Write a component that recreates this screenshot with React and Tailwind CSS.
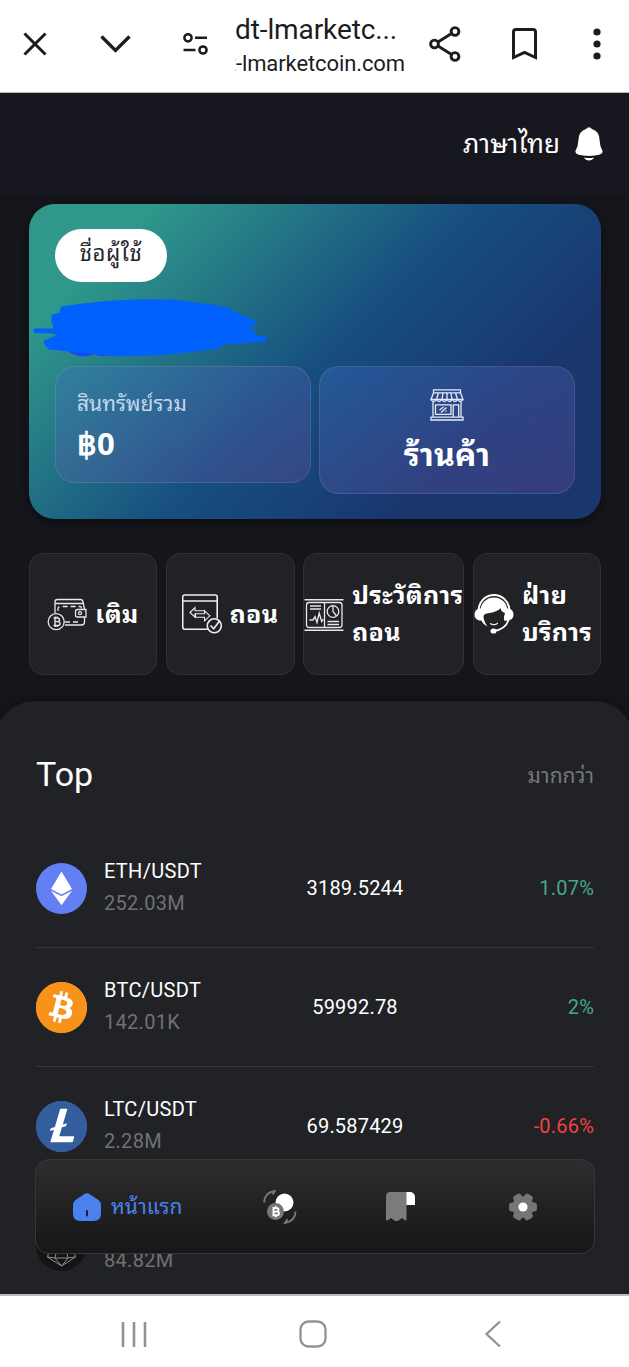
import React from "react";
import { SiBitcoin, SiLitecoin } from "react-icons/si";

const pairs = [
  { id: "eth", name: "ETH/USDT", volume: "252.03M", price: "3189.5244", change: "1.07%", up: true },
  { id: "btc", name: "BTC/USDT", volume: "142.01K", price: "59992.78", change: "2%", up: true },
  { id: "ltc", name: "LTC/USDT", volume: "2.28M", price: "69.587429", change: "-0.66%", up: false },
  { id: "eos", name: "EOS/USDT", volume: "84.82M" },
];

function CoinLogo({ id }) {
  if (id === "btc") {
    return (
      <span className="flex size-[51px] rounded-full border border-[#f7931a] bg-white">
        <SiBitcoin className="-m-px size-[51px] shrink-0 text-[#f7931a]" />
      </span>
    );
  }
  if (id === "ltc") {
    return (
      <span className="flex size-[51px] rounded-full border border-[#345d9d] bg-white">
        <SiLitecoin className="-m-px size-[51px] shrink-0 text-[#345d9d]" />
      </span>
    );
  }
  if (id === "eth") {
    return (
      <svg className="size-[51px]" viewBox="0 0 51 51">
        <circle cx="25.5" cy="25.5" r="25.5" fill="#627ff3" />
        <path d="M25.5 8.5 36 26l-10.5 5.500L15 26z" fill="#fff" />
        <path d="M15 27.8l10.500 5.500 10.500-5.500-10.500 14.400z" fill="#fff" />
      </svg>
    );
  }
  return (
    <svg className="size-[51px]" viewBox="0 0 51 51" fill="none" stroke="#8d8d8d" strokeWidth="1">
      <circle cx="25.5" cy="25.5" r="25.5" fill="#141414" stroke="none" />
      <path d="M25.500 8 16 20l-4.500 17 14.200 9L39.500 37 35 20zM11.500 37l7.500 1h13l7.500-1M19 38l6.700 8 6.300-8M19 38l6.500-30 6.500 30" />
    </svg>
  );
}

function WalletIcon() {
  return (
    <svg className="size-10 shrink-0" viewBox="0 0 40 40" fill="none" stroke="#e8e8e8" strokeWidth="1.300">
      <path d="M8 19V8q0-2.500 2.500-2.500h23q2 0 2.500 2.500l1.500 7M37.500 23v5q0 3-3 3H18M8 9.500h29" />
      <path d="M11 17v-2q0-2.500 3-2.500h19q1.500 0 1.500 2M18 28h16" strokeDasharray="5 3" />
      <path d="M30.500 15.500h8.500v7.500h-8.500q-2 0-2-2v-3.500q0-2 2-2z" />
      <circle cx="33" cy="19.200" r="1.500" />
      <circle cx="9.200" cy="27.700" r="8" />
      <path d="M6.500 24h4q2 0 2 1.800t-2 1.800H8m2.500 0q2.500 0 2.500 2T10.500 31.500h-4M8 24v7.500M8.200 22.500V24m2-1.500V24m-2 7.500V33m2-1.500V33" strokeWidth="1.400" />
    </svg>
  );
}

function WithdrawIcon() {
  return (
    <svg className="size-10 shrink-0" viewBox="0 0 40 40" fill="none" stroke="#f0f0f0" strokeWidth="1.600">
      <path d="M35.200 24.500V3q0-2-2-2H2.700q-2 0-2 2v30q0 2.200 2 2.200h23M.7 7h34.500" />
      <path d="M8 18.500l5-5v3.200h9.500v3H13v3.500zM28 21.800l-5.500-5v3H13.500v3.500h9v3.500z" strokeWidth="1.100" />
      <circle cx="32.300" cy="31.800" r="7" />
      <path d="M28.500 31.500l3.200 3.200 6-8" />
    </svg>
  );
}

function HistoryIcon() {
  return (
    <svg className="size-10 shrink-0" viewBox="0 0 40 40" fill="none" stroke="#e8e8e8" strokeWidth="1.300">
      <path d="M.5 5.800h39M.5 36.200h39" strokeWidth="1.500" />
      <rect x="2.500" y="8.500" width="35.500" height="25" rx="2.500" />
      <path d="M20.500 8.500v25M6 12h11M6 15h11M5.500 26h3.500l2-3.500 2 6 2.200-9.500 2.500 8.500.8-1.500h1M23.500 27.500h11.500M23.500 30.500h11.500" />
      <circle cx="29" cy="17.500" r="5.800" />
      <path d="M29 11.700v5.800l3.500 4.500" />
    </svg>
  );
}

function SupportIcon() {
  return (
    <svg className="size-10 shrink-0" viewBox="0 0 40 40">
      <path d="M4.500 16C6.500-4 33.500-4 35.500 16" fill="none" stroke="#fff" strokeWidth="2" />
      <path d="M6.500 17C7-1 33-1 33.500 17L33 26l-2.500 1-2.500-10C18 20 9.500 20 9.500 22q0 5 4 10.500C8.500 30 6.500 26 6.500 22z" fill="#fff" />
      <path d="M26.500 14C23 19 13.500 18.500 10.500 20.500q-.5 5.500 4 10.500l2.500 2h6l5.500-4.500 2.500-9.500q-4-1-4.500-5z" fill="#212226" />
      <path d="M5 14.500h3.500v12H5Q.5 25 .5 20.500t4.500-6zM35 14.500h-3.500v12H35q4.500-1.500 4.500-6t-4.500-6z" fill="#fff" />
      <path d="M16 29.500q4.500 3 8-.5-2 1.500-4 1.500t-4-1z" fill="#fff" stroke="#fff" strokeWidth=".8" />
      <path d="M34.500 26q-3 9.500-15 11" fill="none" stroke="#fff" strokeWidth="1.800" />
      <ellipse cx="19.500" cy="37" rx="3" ry="2.600" fill="#fff" />
    </svg>
  );
}

function ShopIcon() {
  return (
    <svg className="h-8 w-[34px]" viewBox="0 0 34 32" fill="none" stroke="#e4ebf5" strokeWidth="1.300">
      <path d="M3.500.8h27v3h-27zM3.500 3.800 1 10.500h32L30.500 3.800M8.500 3.800l-2 6.700M13 3.800l-1 6.700M17 3.800v6.700M21 3.800l1 6.700M25.500 3.800l2 6.700" />
      <path d="M1 10.500q2.700 4 5.300 0 2.700 4 5.400 0 2.700 4 5.300 0 2.700 4 5.300 0 2.700 4 5.400 0 2.600 4 5.300 0" />
      <path d="M3 13v15M31 13v15M1 28.200h32V31H1zM5.500 15.800h15.500v9.500H5.500zM23.200 28V15.800h5.500V28M9.500 21l4-3M11 23.500l5.500-5M15.500 22.500l1-.8" />
    </svg>
  );
}

const actions = [
  { label: ["เติม"], icon: WalletIcon, width: "w-[128px]", textWidth: "" },
  { label: ["ถอน"], icon: WithdrawIcon, width: "w-[129px]", textWidth: "" },
  { label: ["ประวัติการ", "ถอน"], icon: HistoryIcon, width: "w-[161px]", textWidth: "w-[111px]" },
  { label: ["ฝ่าย", "บริการ"], icon: SupportIcon, width: "w-[128px]", textWidth: "w-[78px]" },
];

function BrowserBar() {
  return (
    <header className="flex h-[93px] shrink-0 items-center border-b border-[#b9b9bd] bg-white pb-1 text-[#1c1c1e]">
      <svg className="ml-[23px] size-6" viewBox="0 0 24 24" fill="none" stroke="currentColor" strokeWidth="3">
        <path d="M1.500 1.500l21 21m0-21l-21 21" />
      </svg>
      <svg className="ml-[53px] h-[18px] w-[31px]" viewBox="0 0 31 18" fill="none" stroke="currentColor" strokeWidth="3.300">
        <path d="M1.500 1.500l14 14 14-14" />
      </svg>
      <svg className="ml-[51px] h-[22px] w-[27px]" viewBox="0 0 27 22" fill="none" stroke="currentColor" strokeWidth="2.500">
        <circle cx="6" cy="4.800" r="3.600" />
        <circle cx="21" cy="17" r="3.600" />
        <path d="M13 4.800h12M1.500 17h12" />
      </svg>
      <div className="ml-[26px] w-[170px] pt-[5px]">
        <p className="whitespace-nowrap text-[28px] leading-[34px] tracking-[-0.100px]">dt-lmarketc...</p>
        <div className="flex justify-end overflow-hidden">
          <p className="whitespace-nowrap text-[22px] leading-[33px] tracking-[-0.100px]">t-lmarketcoin.com</p>
        </div>
      </div>
      <svg className="ml-[24px] h-[36px] w-[32px]" viewBox="0 0 32 36" fill="none" stroke="currentColor" strokeWidth="2.900">
        <circle cx="5.500" cy="18" r="3.900" />
        <circle cx="26" cy="5.500" r="3.900" />
        <circle cx="26" cy="30.500" r="3.900" />
        <path d="M9 16l13.500-8.500M9 20l13.500 8.500" />
      </svg>
      <svg className="ml-[51px] h-[32px] w-[25px]" viewBox="0 0 25 32" fill="none" stroke="currentColor" strokeWidth="3">
        <path d="M1.500 29.500V4q0-2.500 2.500-2.500h17q2.500 0 2.500 2.500v25.500l-11-5z" />
      </svg>
      <svg className="ml-[56px] h-[32px] w-2" viewBox="0 0 8 32" fill="currentColor">
        <circle cx="4" cy="4" r="3.600" />
        <circle cx="4" cy="16" r="3.600" />
        <circle cx="4" cy="28" r="3.600" />
      </svg>
    </header>
  );
}

function TabBar() {
  return (
    <nav className="absolute bottom-[40px] left-[35px] flex h-[95px] w-[560px] items-center rounded-[14px] border border-[#36373a] bg-linear-to-b from-[#2d2d2e] to-[#171717]">
      <div className="ml-[37px] flex w-[190px] items-center gap-[10px] text-[#4b80ef]">
        <svg className="size-7" viewBox="0 0 28 28">
          <path d="M11.500 1q2.500-1.500 5 0l9 6Q28 8.700 28 12v8.500q0 7.500-7.500 7.500h-13Q0 28 0 20.500V12q0-3.300 2.500-5z" fill="currentColor" />
          <path d="M14 18v4.500" stroke="#212226" strokeWidth="2" strokeLinecap="round" />
        </svg>
        <span className="whitespace-nowrap text-[21px] leading-7">หน้าแรก</span>
      </div>
      <svg className="h-[34px] w-[34px]" viewBox="0 0 34 34">
        <circle cx="21.500" cy="12.500" r="9" fill="#fff" />
        <circle cx="12.500" cy="21.500" r="8.500" fill="#767676" />
        <path d="M9.500 18h4q2 0 2 1.800t-2 1.800h-3.200m3.200 0q2.500 0 2.500 1.800t-2.500 1.900h-4M10.500 18v7.300M12.800 16.300V18m0 7.300v1.900" fill="none" stroke="#fff" strokeWidth="1.900" />
        <path d="M1.200 12.500q0-9.500 10.500-11.500l-2 3.500M32.500 21.500q0 9.500-10.500 11.500l2.500-4" fill="none" stroke="#777" strokeWidth="1.900" />
      </svg>
      <svg className="ml-[89px] h-[29px] w-[29px]" viewBox="0 0 29 29">
        <path d="M20 0h5q4 1 4 5.500V13h-9z" fill="#fff" />
        <path d="M4 0h16.500v28.500l-2-.5-2.500-2-3.500 2.500q-2 1-4 0L5 26l-2.500 2-2.500.5V4.500Q0 0 4 0z" fill="#7b7b7b" />
      </svg>
      <svg className="ml-[94px] h-[28px] w-[28px]" viewBox="0 0 28 28" fill="#757575">
        <circle cx="14" cy="14" r="10.800" />
        <rect x="0" y="9.500" width="28" height="9" rx="3" />
        <rect x="0" y="9.500" width="28" height="9" rx="3" transform="rotate(60 14 14)" />
        <rect x="0" y="9.500" width="28" height="9" rx="3" transform="rotate(120 14 14)" />
        <circle cx="14" cy="14" r="4.600" fill="#fff" />
      </svg>
    </nav>
  );
}

function App() {
  return (
    <div className="flex h-[1367px] w-full flex-col overflow-hidden bg-white font-[Roboto,'Noto_Sans_Thai_Looped','Noto_Looped_Thai',Loma,Waree,Garuda,'Noto_Sans_Thai','Noto_Sans',sans-serif]">
      <BrowserBar />

      <main className="relative flex h-[1201px] shrink-0 flex-col overflow-hidden bg-[#15161b] text-white">
        {/* Language + notifications */}
        <div className="flex h-[102px] shrink-0 items-center justify-end gap-[15px] bg-[#171720] pr-[26px]">
          <span className="whitespace-nowrap text-[26px] leading-9">ภาษาไทย</span>
          <svg className="h-[34px] w-[28px]" viewBox="0 0 28 34" fill="#fff">
            <path d="M11 2q3-3.500 6 0 7 2 7.500 10.500.3 7 3 11.500Q29 29 14 29T.5 24q2.700-4.500 3-11.500Q4 4 11 2zM9 30.500q5 1 10 0-1.500 3-5 3t-5-3z" />
          </svg>
        </div>

        {/* Balance card */}
        <section className="relative ml-[29px] mr-[28px] mt-[9px] h-[315px] shrink-0 rounded-[26px] bg-linear-[135deg,#2f988b_14%,#174f80_50%,#19366d_77%] px-[26px] pt-[25px] shadow-[0_3px_8px_#0b0c10]">
          <div className="flex h-[53px] w-[112px] items-center justify-center rounded-full bg-white text-[22px] text-[#25262a]">
            <span className="-mt-1 leading-8 tracking-[0.600px]">ชื่อผู้ใช้</span>
          </div>
          <svg className="absolute left-[3px] top-[95px] h-[60px] w-[238px]" viewBox="0 0 238 60" fill="#0061ff">
            <path d="M35 52q14 9 27 3 9 4 18 0z" fill="#1248f5" />
            <path
              d="M30 9Q66 3 105 2t50 2q22 2 40 6l16 8 11 5v3l-14 2 14 5v1l-12 2 23 3v2l-43 3-3 4-40 5q-60 5-79 1L17 49l-4-6 14-6-5-4-19-.5V31l21 0-3-8v-6l8-2z"
              stroke="#0061ff"
              strokeWidth="3"
              strokeLinejoin="round"
            />
          </svg>
          <div className="mt-[84px] flex items-start justify-between">
            <div className="flex h-[117px] w-[256px] flex-col rounded-[20px] border border-white/10 bg-linear-[160deg,#3c70ca55,#8050a248] pl-[21px] pt-[21px]">
              <span className="text-[21px] leading-8 text-[#c5d8eb]">สินทรัพย์รวม</span>
              <span className="font-['Noto_Sans',sans-serif] text-[31px] font-bold leading-[46px]">฿0</span>
            </div>
            <div className="flex h-[128px] w-[256px] flex-col items-center rounded-[20px] border border-white/10 bg-linear-[160deg,#3c70ca55,#8050a248] pt-[22px]">
              <ShopIcon />
              <span className="mt-[12px] text-[32px] font-bold leading-[44px]">ร้านค้า</span>
            </div>
          </div>
        </section>

        {/* Quick actions */}
        <section className="ml-[29px] mr-[28px] mt-[34px] flex h-[122px] shrink-0 justify-between">
          {actions.map(({ label, icon: Icon, width, textWidth }, i) => (
            <button
              key={i}
              className={`flex items-center justify-center gap-2 rounded-[14px] border border-[#303136] bg-[#212226] text-left ${width}`}
            >
              <Icon />
              <span className={`whitespace-nowrap text-[25px] font-bold leading-[37px] tracking-[0.300px] ${textWidth}`}>
                {label.map((line) => (
                  <span key={line} className="block">{line}</span>
                ))}
              </span>
            </button>
          ))}
        </section>

        {/* Market list */}
        <section className="-mx-[5px] mt-[26px] h-[640px] shrink-0 rounded-t-[40px] bg-[#212226] pl-[41px] pr-[40px] shadow-[0_-2px_8px_#101115]">
          <div className="flex h-[128px] items-center justify-between pt-[18px]">
            <h2 className="text-[34px] leading-10">Top</h2>
            <span className="pt-1 text-[21px] leading-7 text-[#77787b]">มากกว่า</span>
          </div>
          {pairs.map((p) => (
            <div key={p.id} className="flex h-[119px] items-center border-b border-[#36373b]">
              <CoinLogo id={p.id} />
              <div className="-mt-[2px] ml-[17px] w-[150px]">
                <p className="text-[20px] leading-8 tracking-[0.300px]">{p.name}</p>
                <p className="text-[20px] leading-8 tracking-[0.300px] text-[#707175]">{p.volume}</p>
              </div>
              <p className="w-[202px] text-center text-[20px] tracking-[0.200px]">{p.price}</p>
              <p className={`flex-1 text-right text-[20px] tracking-[0.200px] ${p.up ? "text-[#43a88b]" : "text-[#ef4343]"}`}>{p.change}</p>
            </div>
          ))}
        </section>

        <TabBar />
      </main>

      {/* System navigation */}
      <footer className="flex h-[73px] shrink-0 items-center border-t-2 border-[#bbbbc1] bg-white pt-[5px]">
        <svg className="ml-[121px] h-[27px] w-[26px]" viewBox="0 0 26 27" stroke="#929292" strokeWidth="2.600">
          <path d="M2 1v25M13 1v25M24 1v25" />
        </svg>
        <svg className="ml-[152px] size-[28px]" viewBox="0 0 28 28" fill="none" stroke="#929292" strokeWidth="2.300">
          <rect x="1.500" y="1.500" width="25" height="25" rx="8" />
        </svg>
        <svg className="ml-[157px] h-[28px] w-[18px]" viewBox="0 0 18 28" fill="none" stroke="#929292" strokeWidth="2.300">
          <path d="M16 1.500 2.500 14 16 26.500" />
        </svg>
      </footer>
    </div>
  );
}

export default App;
